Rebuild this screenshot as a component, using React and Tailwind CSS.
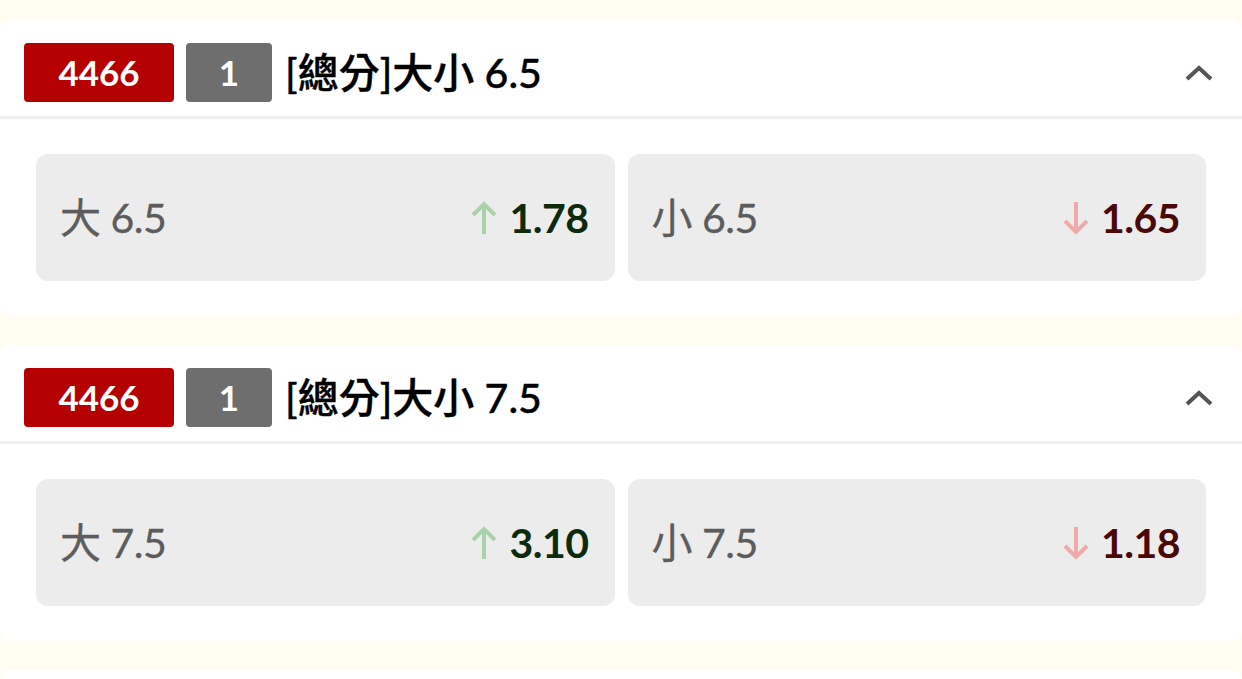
const markets = [
    {
        id: "4466",
        period: "1",
        title: "[總分]大小 6.5",
        options: [
            { label: "大 6.5", odds: "1.78", trend: "up" },
            { label: "小 6.5", odds: "1.65", trend: "down" },
        ],
    },
    {
        id: "4466",
        period: "1",
        title: "[總分]大小 7.5",
        options: [
            { label: "大 7.5", odds: "3.10", trend: "up" },
            { label: "小 7.5", odds: "1.18", trend: "down" },
        ],
    },
]

const font = { fontFamily: "Lato, 'Noto Sans CJK TC', sans-serif" }

function Arrow({ trend }) {
    const up = trend === "up"
    return (
        <svg
            width="28"
            height="34"
            viewBox="0 0 28 34"
            fill="none"
            stroke={up ? "#a9d2ab" : "#f0a9a9"}
            strokeWidth="4"
            className={up ? "" : "rotate-180"}
        >
            <path d="M14 3 V33" />
            <path d="M3 14 L14 3 L25 14" />
        </svg>
    )
}

function OddsButton({ option }) {
    const up = option.trend === "up"
    return (
        <button className="flex-1 h-[127px] bg-[#ececec] rounded-[12px] flex items-center justify-between pl-[24px] pr-[26px]">
            <span className="text-[41px] text-[#5c5c5c] tracking-[-0.5px] [-webkit-text-stroke:0.35px]">
                {option.label}
            </span>
            <span className="flex items-center gap-[11px]">
                <Arrow trend={option.trend} />
                <span className={`text-[41px] font-bold tracking-[-0.5px] ${up ? "text-[#0c2a0c]" : "text-[#4a0808]"}`}>
                    {option.odds}
                </span>
            </span>
        </button>
    )
}

function MarketCard({ market }) {
    return (
        <div className="bg-white rounded-[10px]">
            {/* Header */}
            <div className="h-[99px] pt-[9px] flex items-center pl-[24px] pr-[28px] border-b-[3px] border-[#efeff3]">
                <span className="w-[150px] h-[59px] bg-[#b40000] rounded-[4px] text-white text-[35px] font-bold flex items-center justify-center">
                    {market.id}
                </span>
                <span className="ml-[12px] w-[86px] h-[59px] bg-[#6e6e6e] rounded-[4px] text-white text-[35px] font-bold flex items-center justify-center">
                    {market.period}
                </span>
                <span className="ml-[13px] text-[41px] font-medium text-black flex-1 [-webkit-text-stroke:0.4px]">
                    {market.title}
                </span>
                <svg width="30" height="18" viewBox="0 0 30 18" fill="none" stroke="#555" strokeWidth="4">
                    <path d="M3 15 L15 4 L27 15" />
                </svg>
            </div>

            {/* Options */}
            <div className="flex gap-[13px] px-[36px] pt-[35px] pb-[35px]">
                {market.options.map((option, index) => (
                    <OddsButton key={index} option={option} />
                ))}
            </div>
        </div>
    )
}

export default function App() {
    return (
        <div className="min-h-[679px] bg-[#fffcf2] pt-[20px] flex flex-col gap-[29px]" style={font}>
            {markets.map((market, index) => (
                <MarketCard key={index} market={market} />
            ))}
            <div className="bg-white rounded-[10px] h-[40px]" />
        </div>
    )
}
